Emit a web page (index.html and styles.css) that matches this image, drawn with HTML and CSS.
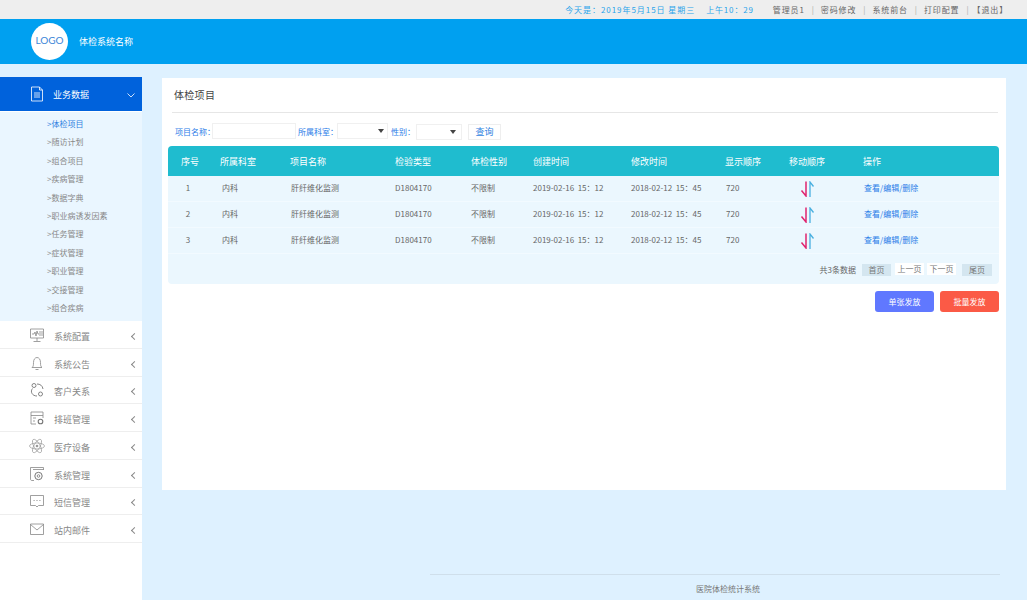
FILE: index.html
```html
<!DOCTYPE html>
<html lang="zh-CN">
<head>
<meta charset="utf-8">
<title>体检项目</title>
<link rel="stylesheet" href="styles.css">
</head>
<body>
<div class="topbar">
  <span class="date">今天是：2019年5月15日 星期三</span>
  <span class="time">上午10：29</span>
  <nav class="toplinks">
    <a>管理员1</a><i>|</i><a>密码修改</a><i>|</i><a>系统前台</a><i>|</i><a>打印配置</a><i>|</i><a class="logout">【退出】</a>
  </nav>
</div>
<header class="header">
  <div class="logo">LOGO</div>
  <div class="sysname">体检系统名称</div>
</header>
<div class="layout">
  <aside class="sidebar">
    <div class="active-item">
      <svg class="ic" viewBox="0 0 16 16"><path d="M2.500 1h8l3 3v11h-11zM10.500 1v3h3M5 7h6M5 9h6M5 11h6" fill="none" stroke="#fff" stroke-width=".8"/></svg>
      <span>业务数据</span>
      <svg class="chev-down" viewBox="0 0 8 5"><path d="M.5.500 4 4 7.500.5" fill="none" stroke="#fff" stroke-width=".8"/></svg>
    </div>
    <ul class="submenu">
      <li class="current">&gt;体检项目</li>
      <li>&gt;随访计划</li>
      <li>&gt;组合项目</li>
      <li>&gt;疾病管理</li>
      <li>&gt;数据字典</li>
      <li>&gt;职业病诱发因素</li>
      <li>&gt;任务管理</li>
      <li>&gt;症状管理</li>
      <li>&gt;职业管理</li>
      <li>&gt;交接管理</li>
      <li>&gt;组合疾病</li>
    </ul>
    <ul class="menu">
      <li><svg class="ic" viewBox="0 0 16 16"><path d="M1.500 2h13v9h-13zM8 11v3M4.500 14.500h7M3 7h2l1-2 1 4 1-5 1 3h1M11 4v5M13 4v5" fill="none" stroke="#888" stroke-width=".8"/></svg><span>系统配置</span><b></b></li>
      <li><svg class="ic" viewBox="0 0 16 16"><path d="M3 12.500c1.300-1 1.500-2 1.500-5 0-3 1.500-5 3.500-5s3.500 2 3.500 5c0 3 .2 4 1.500 5zM6.500 14.500h3" fill="none" stroke="#888" stroke-width=".8"/></svg><span>系统公告</span><b></b></li>
      <li><svg class="ic" viewBox="0 0 16 16"><circle cx="5" cy="3.500" r="2" fill="none" stroke="#777" stroke-width=".9"/><circle cx="11.500" cy="12" r="2" fill="none" stroke="#777" stroke-width=".9"/><path d="M3.500 6.500C1 9.500 3 14 8 14M8 2c3 0 5.500 1.500 6 5" fill="none" stroke="#777" stroke-width=".9"/></svg><span>客户关系</span><b></b></li>
      <li><svg class="ic" viewBox="0 0 16 16"><path d="M7 14H2V2h12v6M2 5.500h12M4 8h3M4 11h2" fill="none" stroke="#888" stroke-width=".8"/><circle cx="11.500" cy="11.500" r="2.300" fill="none" stroke="#777" stroke-width="1.100"/></svg><span>排班管理</span><b></b></li>
      <li><svg class="ic" viewBox="0 0 16 16"><g fill="none" stroke="#999" stroke-width=".7"><ellipse cx="8" cy="8" rx="7.500" ry="3"/><ellipse cx="8" cy="8" rx="7.500" ry="3" transform="rotate(60 8 8)"/><ellipse cx="8" cy="8" rx="7.500" ry="3" transform="rotate(120 8 8)"/></g><circle cx="8" cy="8" r="1.300" fill="#999"/></svg><span>医疗设备</span><b></b></li>
      <li><svg class="ic" viewBox="0 0 16 16"><path d="M5 14.500H3c-1 0-1.500-.5-1.500-1.500V1.500H14.500V4M4 3.500h10.500" fill="none" stroke="#888" stroke-width=".8"/><circle cx="9.500" cy="10" r="3.700" fill="none" stroke="#777" stroke-width="1"/><circle cx="9.500" cy="10" r="1.300" fill="none" stroke="#777" stroke-width=".8"/></svg><span>系统管理</span><b></b></li>
      <li><svg class="ic" viewBox="0 0 16 16"><path d="M1.500 2.500h13v10H9.500L8 14l-1.500-1.500h-5zM4.500 7.500h1.200M7.400 7.500h1.200M10.300 7.500h1.200" fill="none" stroke="#888" stroke-width=".8"/></svg><span>短信管理</span><b></b></li>
      <li><svg class="ic" viewBox="0 0 16 16"><path d="M1.500 3h13v10.500h-13zM1.500 3.500 8 9l6.500-5.500" fill="none" stroke="#888" stroke-width=".8"/></svg><span>站内邮件</span><b></b></li>
    </ul>
  </aside>
  <main class="main">
    <section class="card">
      <h1 class="card-title">体检项目</h1>
      <form class="search">
        <label>项目名称：</label><input class="name-input" type="text">
        <label class="l2">所属科室：</label><div class="select s1"></div>
        <label class="l3">性别：</label><div class="select s2"></div>
        <button class="query" type="button">查询</button>
      </form>
      <table class="grid">
        <colgroup>
          <col class="c1"><col class="c2"><col class="c3"><col class="c4"><col class="c5"><col class="c6"><col class="c7"><col class="c8"><col class="c9"><col class="c10">
        </colgroup>
        <thead>
          <tr><th class="no">序号</th><th>所属科室</th><th>项目名称</th><th>检验类型</th><th>体检性别</th><th>创建时间</th><th>修改时间</th><th>显示顺序</th><th>移动顺序</th><th>操作</th></tr>
        </thead>
        <tbody>
          <tr><td class="no">1</td><td class="p2">内科</td><td class="p1">肝纤维化监测</td><td>D1804170</td><td>不限制</td><td>2019-02-16&nbsp;&nbsp;15：12</td><td>2018-02-12&nbsp;&nbsp;15：45</td><td class="p1">720</td><td class="mv"><svg viewBox="0 0 16 16"><path d="M6 .5V15L1.500 9.500" fill="none" stroke="#e0246f" stroke-width="1.500"/><path d="M10 16V1l3.500 4.500" fill="none" stroke="#4ab0e0" stroke-width="1.300"/></svg></td><td class="ops">查看/编辑/删除</td></tr>
          <tr><td class="no">2</td><td class="p2">内科</td><td class="p1">肝纤维化监测</td><td>D1804170</td><td>不限制</td><td>2019-02-16&nbsp;&nbsp;15：12</td><td>2018-02-12&nbsp;&nbsp;15：45</td><td class="p1">720</td><td class="mv"><svg viewBox="0 0 16 16"><path d="M6 .5V15L1.500 9.500" fill="none" stroke="#e0246f" stroke-width="1.500"/><path d="M10 16V1l3.500 4.500" fill="none" stroke="#4ab0e0" stroke-width="1.300"/></svg></td><td class="ops">查看/编辑/删除</td></tr>
          <tr><td class="no">3</td><td class="p2">内科</td><td class="p1">肝纤维化监测</td><td>D1804170</td><td>不限制</td><td>2019-02-16&nbsp;&nbsp;15：12</td><td>2018-02-12&nbsp;&nbsp;15：45</td><td class="p1">720</td><td class="mv"><svg viewBox="0 0 16 16"><path d="M6 .5V15L1.500 9.500" fill="none" stroke="#e0246f" stroke-width="1.500"/><path d="M10 16V1l3.500 4.500" fill="none" stroke="#4ab0e0" stroke-width="1.300"/></svg></td><td class="ops">查看/编辑/删除</td></tr>
        </tbody>
      </table>
      <div class="pager">
        <span class="total">共3条数据</span>
        <a class="pg dim">首页</a><a class="pg lite">上一页</a><a class="pg lite">下一页</a><a class="pg dim last">尾页</a>
      </div>
      <div class="actions">
        <button class="btn blue" type="button">单张发放</button>
        <button class="btn red" type="button">批量发放</button>
      </div>
    </section>
    <footer class="footer">医院体检统计系统</footer>
  </main>
</div>
</body>
</html>
```

FILE: styles.css
```css
* { box-sizing: border-box; }
html, body { height: 100%; }
body {
  margin: 0;
  display: flex;
  flex-direction: column;
  overflow: hidden;
  background: #def1ff;
  color: #666;
  font-family: "Noto Sans CJK SC", "Noto Sans", sans-serif;
  font-size: 8px;
}
ul { list-style: none; margin: 0; padding: 0; }

.topbar {
  height: 19px;
  flex: none;
  display: flex;
  align-items: center;
  justify-content: flex-end;
  padding-right: 19px;
  background: #eee;
  letter-spacing: .85px;
  color: #29a4ea;
}
.date { letter-spacing: .95px; }
.time { margin-left: 11px; }
.toplinks { display: flex; margin-left: 19px; color: #666; }
.toplinks i { font-style: normal; margin: 0 7px; color: #aaa; letter-spacing: 0; }
.logout { margin-left: -3px; }

.header {
  height: 45px;
  flex: none;
  display: flex;
  align-items: center;
  padding-left: 31px;
  background: #00a0f0;
  color: #fff;
}
.logo {
  width: 37px;
  height: 37px;
  display: flex;
  align-items: center;
  justify-content: center;
  margin-right: 11px;
  padding-bottom: 3px;
  border-radius: 50%;
  background: #fff;
  color: #3d86d8;
  font-size: 10px;
  font-family: Lato, sans-serif;
}
.sysname { font-size: 9px; }

.layout { flex: 1; display: flex; min-height: 0; }
.sidebar {
  width: 142px;
  flex: none;
  margin-top: 13px;
  background: #fff;
}
.ic { width: 16px; height: 16px; flex: none; }
.active-item {
  height: 34px;
  display: flex;
  align-items: center;
  padding-left: 29px;
  background: #0062dc;
  color: #fff;
  font-size: 9px;
}
.active-item span { margin-left: 8px; }
.chev-down { width: 8px; height: 5px; margin: 3px 0 0 38px; }
.submenu {
  margin-top: 1px;
  padding-top: 3px;
  height: 209px;
  background: #eaf6ff;
}
.submenu li { height: 18.4px; line-height: 18.4px; padding-left: 47px; color: #888; }
.submenu .current { color: #2f7fe0; }
.menu li {
  height: 27.75px;
  display: flex;
  align-items: center;
  padding: 4px 0 0 29px;
  border-bottom: 1px solid #eee;
  color: #888;
  font-size: 9px;
}
.menu .ic { margin-top: -3px; }
.menu li span { margin-left: 9px; }
.menu li b {
  width: 5px;
  height: 5px;
  margin-left: 42px;
  border-left: 1px solid #888;
  border-bottom: 1px solid #888;
  transform: rotate(45deg);
}

.main { flex: 1; display: flex; flex-direction: column; min-width: 0; padding: 14px 21px 0 20px; }
.card { height: 412px; flex: none; padding: 0 6px; background: #fff; }
.card-title {
  height: 35px;
  margin: 0 2px 0 4px;
  padding: 8px 0 0 2px;
  border-bottom: 1px solid #e6e6e6;
  font-size: 10px;
  letter-spacing: .3px;
  line-height: 17px;
  font-weight: 400;
  color: #444;
}
.search { display: flex; align-items: center; height: 18px; margin-top: 9px; padding-left: 7px; color: #2a7de8; }
.search label { white-space: nowrap; }
.name-input { width: 84px; height: 16px; margin: 0 0 0 -3px; border: 1px solid #f0f0f0; background: #fff; padding: 0; }
.l2 { margin-left: 2px; }
.l3 { margin-left: 3px; }
.select { height: 16px; border: 1px solid #f0f0f0; position: relative; background: #fff; }
.select::after {
  content: "";
  position: absolute;
  top: 5px;
  right: 3px;
  border: 3.500px solid transparent;
  border-top: 4px solid #444;
  border-bottom: 0;
}
.s1 { width: 51px; margin-left: -1px; }
.s2 { width: 46px; margin: 1px 0 0 1px; }
.s2::after { right: 5px; }
.query {
  width: 33px;
  height: 16px;
  margin: 1px 0 0 6px;
  padding: 0;
  border: 1px solid #eee;
  background: #fff;
  color: #2f7fe0;
  font: 9px "Noto Sans CJK SC", sans-serif;
}
.grid {
  width: 831px;
  margin-top: 6px;
  border-collapse: separate;
  border-spacing: 0;
  table-layout: fixed;
}
.c1 { width: 52px; } .c2 { width: 70px; } .c3 { width: 105px; } .c4 { width: 76px; } .c5 { width: 62px; }
.c6 { width: 98px; } .c7 { width: 94px; } .c8 { width: 64px; } .c9 { width: 74px; } .c10 { width: 136px; }
.grid th {
  height: 30px;
  padding: 0;
  background: #1fbccf;
  color: #fff;
  font-size: 9px;
  font-weight: 400;
  text-align: left;
}
.grid th:first-child { border-top-left-radius: 4px; }
.grid th:last-child { border-top-right-radius: 4px; }
.grid th.no { padding-right: 8px; text-align: center; }
.grid td {
  height: 26px;
  padding: 0 0 3px;
  background: #ebf7fe;
  border-bottom: 1px solid #f2faff;
  color: #666;
  white-space: nowrap;
}
.grid td.no { padding-right: 12px; text-align: center; }
.grid td.p1 { padding-left: 1px; }
.grid td.p2 { padding-left: 2px; }
.grid td.mv { padding: 0 0 0 11px; }
.mv svg { display: block; width: 16px; height: 16px; }
.grid td.ops { padding-left: 1px; color: #2a7de8; }

.pager {
  height: 30px;
  width: 831px;
  display: flex;
  align-items: center;
  justify-content: flex-end;
  padding-right: 7px;
  background: #ebf7fe;
  border-radius: 0 0 4px 4px;
}
.total { margin-right: 6px; color: #666; }
.pg { width: 29px; height: 12px; line-height: 12px; text-align: center; color: #777; }
.dim { background: #d4e6f0; margin-top: 1px; }
.lite { background: #fff; margin: -1px 0 0 4px; }
.lite + .lite { margin-left: 3px; }
.last { width: 30px; margin-left: 6px; }

.actions { display: flex; justify-content: flex-end; gap: 6px; width: 831px; margin-top: 7px; }
.btn {
  width: 59px;
  height: 21px;
  padding: 0;
  border: 0;
  border-radius: 3px;
  color: #fff;
  font: 8px "Noto Sans CJK SC", sans-serif;
}
.blue { background: #6078ff; }
.red { background: #fb5a46; }

.footer {
  flex: none;
  margin: 84px 6px 0 268px;
  padding: 6px 0 0 26px;
  height: 26px;
  border-top: 1px solid #cfdfeb;
  line-height: 15px;
  text-align: center;
  color: #777;
}
```
